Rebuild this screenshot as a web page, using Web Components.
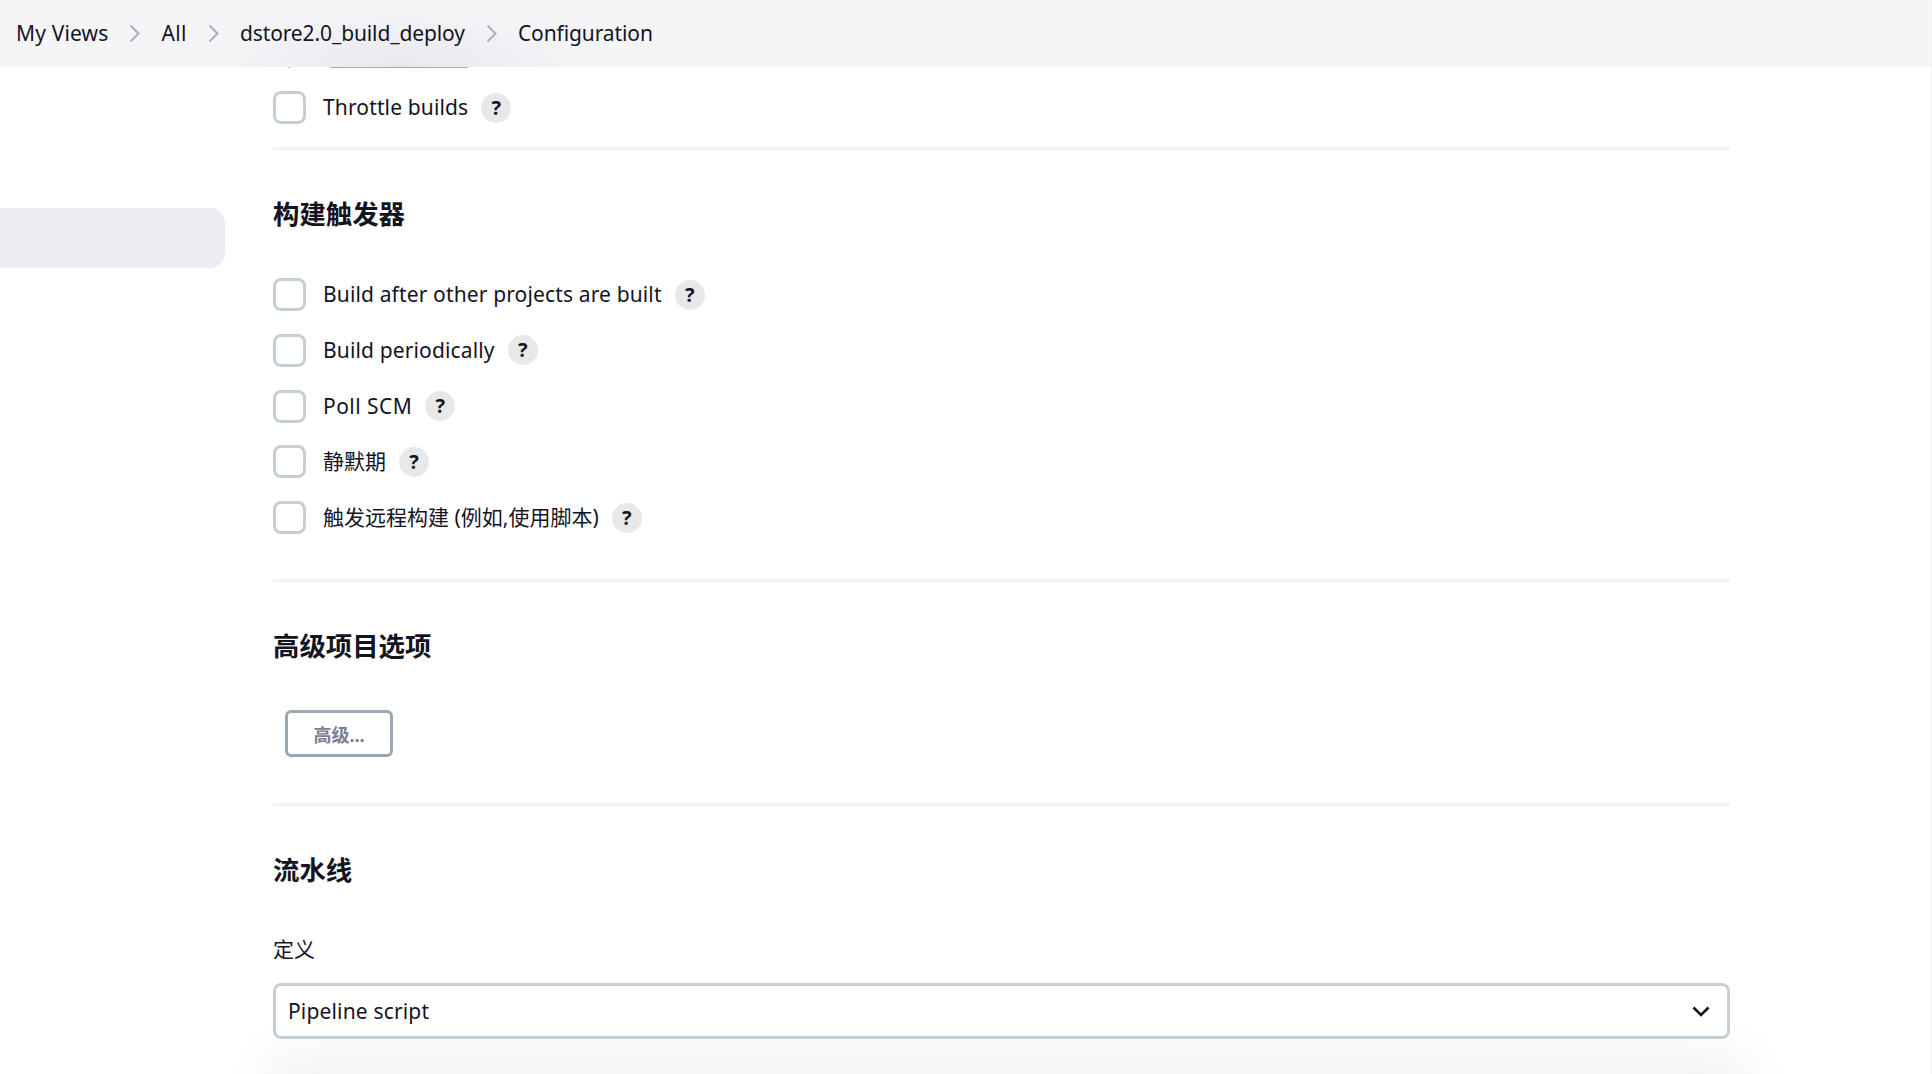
<!DOCTYPE html>
<html lang="zh">
<head>
<meta charset="utf-8">
<title>dstore2.0_build_deploy Configuration</title>
<style>
  html, body { margin: 0; height: 100%; overflow: hidden; background: #fff; }
  body {
    font-family: "Noto Sans", "Noto Sans CJK SC", sans-serif;
    color: #14141f;
    font-size: 21px;
  }
</style>
</head>
<body>
<jk-page>
  <jk-breadcrumbs slot="bar">
    <jk-crumb style="letter-spacing:.15px">My Views</jk-crumb>
    <jk-crumb style="letter-spacing:.4px">All</jk-crumb>
    <jk-crumb style="letter-spacing:-.11px">dstore2.0_build_deploy</jk-crumb>
    <jk-crumb style="letter-spacing:-.1px" last>Configuration</jk-crumb>
  </jk-breadcrumbs>
  <jk-side-item slot="side"></jk-side-item>

  <jk-check lone latin>Throttle builds</jk-check>
  <jk-section heading="构建触发器">
    <jk-check latin>Build after other projects are built</jk-check>
    <jk-check latin>Build periodically</jk-check>
    <jk-check style="letter-spacing:.45px">Poll SCM</jk-check>
    <jk-check>静默期</jk-check>
    <jk-check lone>触发远程构建 (例如,使用脚本)</jk-check>
  </jk-section>
  <jk-section heading="高级项目选项" class="adv">
    <jk-button>高级...</jk-button>
  </jk-section>
  <jk-section heading="流水线" class="pipe">
    <jk-select label="定义" value="Pipeline script"></jk-select>
  </jk-section>
</jk-page>

<script>
class JkPage extends HTMLElement {
  constructor() {
    super();
    this.attachShadow({ mode: "open" });
    this.shadowRoot.innerHTML = `
      <style>
        :host { display: block; height: 1074px; overflow: hidden; position: relative; }
        .bar {
          height: 67px; position: relative; z-index: 2;
          background: radial-gradient(ellipse 190px 60px at 400px 67px, #e9e9ee, #f5f5f8);
        }
        /* bottoms of the controls that have scrolled under the bar */
        .bar::before {
          content: ""; position: absolute; left: 330px; top: 67px; width: 138px; height: 1px;
          background: #9ba7b3; border-radius: 0 0 2px 2px;
        }
        .bar::after {
          content: ""; position: absolute; left: 288px; top: 67px; width: 3px; height: 1px;
          background: #c6ced6;
        }
        .layout { display: flex; align-items: flex-start; }
        .side { width: 273px; flex: none; padding-top: 141px; }
        .main { width: 1457px; flex: none; padding-top: 24px; }
        .tail {
          position: absolute; left: 270px; right: 187px; bottom: -40px; height: 62px;
          background: #f0f0f2; filter: blur(22px); opacity: .8;
        }
        .edge { position: absolute; top: 0; bottom: 0; right: 0; width: 1px; background: #f1f1f3; z-index: 3; }
      </style>
      <div class="bar"><slot name="bar"></slot></div>
      <div class="layout">
        <div class="side"><slot name="side"></slot></div>
        <div class="main"><slot></slot></div>
      </div>
      <div class="tail"></div>
      <div class="edge"></div>
    `;
  }
}

class JkBreadcrumbs extends HTMLElement {
  constructor() {
    super();
    this.attachShadow({ mode: "open" });
    this.shadowRoot.innerHTML = `
      <style>
        :host { display: flex; align-items: center; height: 67px; padding-left: 16px; }
      </style>
      <slot></slot>
    `;
  }
}

class JkCrumb extends HTMLElement {
  constructor() {
    super();
    this.attachShadow({ mode: "open" });
    this.shadowRoot.innerHTML = `
      <style>
        :host { display: inline-flex; align-items: center; margin-top: -1px; }
        svg { width: 11px; height: 19px; margin: 0 21px; display: block; }
        :host([last]) svg { display: none; }
      </style>
      <slot></slot>
      <svg viewBox="0 0 11 19" fill="none" stroke="#aeaebd" stroke-width="2"><path d="M1.5 1.5l8 8-8 8"/></svg>
    `;
  }
}

class JkSideItem extends HTMLElement {
  constructor() {
    super();
    this.attachShadow({ mode: "open" });
    this.shadowRoot.innerHTML = `
      <style>
        :host { display: block; width: 225px; height: 60px; background: #ecedf2; border-radius: 0 15px 15px 0; }
      </style>
    `;
  }
}

class JkCheck extends HTMLElement {
  constructor() {
    super();
    this.attachShadow({ mode: "open" });
    this.shadowRoot.innerHTML = `
      <style>
        :host { display: flex; align-items: center; height: 33px; margin-bottom: 22.8px; line-height: 33px; }
        :host([lone]) { margin-bottom: 0; }
        :host([latin]) { letter-spacing: .14px; }
        .box {
          box-sizing: border-box; width: 33px; height: 33px; flex: none;
          border: 3px solid #c6ced6; border-radius: 8px; background: #fff;
          margin-right: 17px;
        }
        .help {
          box-sizing: border-box; width: 30px; height: 30px; flex: none; margin-left: 13px;
          border-radius: 50%; background: #e8e8e8;
          display: flex; align-items: center; justify-content: center;
          font: 700 20px/1 "Noto Sans", sans-serif; color: #14141f; letter-spacing: 0;
        }
      </style>
      <span class="box"></span>
      <slot></slot>
      <span class="help">?</span>
    `;
  }
}

class JkSection extends HTMLElement {
  constructor() {
    super();
    this.attachShadow({ mode: "open" });
    this.shadowRoot.innerHTML = `
      <style>
        :host { display: block; border-top: 3px solid #f2f2f5; padding-top: 46px; margin-top: 23px; }
        :host(.adv) { margin-top: 45px; }
        :host(.pipe) { margin-top: 46px; }
        h2 { margin: 0 0 45px; font-size: 26.4px; line-height: 37px; font-weight: 700; color: #14141f; }
      </style>
      <h2></h2>
      <slot></slot>
    `;
    this.shadowRoot.querySelector("h2").textContent = this.getAttribute("heading");
  }
}

class JkButton extends HTMLElement {
  constructor() {
    super();
    this.attachShadow({ mode: "open" });
    this.shadowRoot.innerHTML = `
      <style>
        :host {
          display: flex; box-sizing: border-box; width: 108px; height: 47px; margin-left: 12px;
          align-items: center; justify-content: center;
          border: 3px solid #9ba7b3; border-radius: 6px; background: #fff;
          color: #7c7c96; font-size: 18px; font-weight: 700;
        }
      </style>
      <slot></slot>
    `;
  }
}

class JkSelect extends HTMLElement {
  constructor() {
    super();
    this.attachShadow({ mode: "open" });
    this.shadowRoot.innerHTML = `
      <style>
        :host { display: block; }
        label { display: block; line-height: 28px; padding-top: 1px; margin-bottom: 20px; }
        .field {
          box-sizing: border-box; height: 56px; display: flex; align-items: center;
          justify-content: space-between; padding: 0 17px 0 12px;
          border: 3px solid #c6ced6; border-radius: 8px; background: #fff;
          position: relative; z-index: 1; letter-spacing: .16px;
        }
        svg { width: 18px; height: 11px; display: block; }
      </style>
      <label></label>
      <div class="field">
        <span></span>
        <svg viewBox="0 0 18 11" fill="none" stroke="#14141f" stroke-width="2.6"><path d="M1.5 1.5L9 9l7.5-7.5"/></svg>
      </div>
    `;
    this.shadowRoot.querySelector("label").textContent = this.getAttribute("label");
    this.shadowRoot.querySelector(".field span").textContent = this.getAttribute("value");
  }
}

customElements.define("jk-page", JkPage);
customElements.define("jk-breadcrumbs", JkBreadcrumbs);
customElements.define("jk-crumb", JkCrumb);
customElements.define("jk-side-item", JkSideItem);
customElements.define("jk-check", JkCheck);
customElements.define("jk-section", JkSection);
customElements.define("jk-button", JkButton);
customElements.define("jk-select", JkSelect);
</script>
</body>
</html>
